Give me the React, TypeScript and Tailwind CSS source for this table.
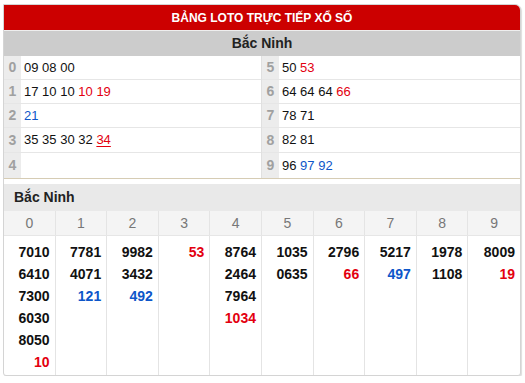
import React from "react";

type Part = { t: string; c?: "red" | "blue"; u?: boolean };

const left: Part[][] = [
  [{ t: "09" }, { t: "08" }, { t: "00" }],
  [{ t: "17" }, { t: "10" }, { t: "10" }, { t: "10", c: "red" }, { t: "19", c: "red" }],
  [{ t: "21", c: "blue" }],
  [{ t: "35" }, { t: "35" }, { t: "30" }, { t: "32" }, { t: "34", c: "red", u: true }],
  [],
];

const right: Part[][] = [
  [{ t: "50" }, { t: "53", c: "red" }],
  [{ t: "64" }, { t: "64" }, { t: "64" }, { t: "66", c: "red" }],
  [{ t: "78" }, { t: "71" }],
  [{ t: "82" }, { t: "81" }],
  [{ t: "96" }, { t: "97", c: "blue" }, { t: "92", c: "blue" }],
];

const cols: Part[][] = [
  [{ t: "7010" }, { t: "6410" }, { t: "7300" }, { t: "6030" }, { t: "8050" }, { t: "10", c: "red" }],
  [{ t: "7781" }, { t: "4071" }, { t: "121", c: "blue" }],
  [{ t: "9982" }, { t: "3432" }, { t: "492", c: "blue" }],
  [{ t: "53", c: "red" }],
  [{ t: "8764" }, { t: "2464" }, { t: "7964" }, { t: "1034", c: "red" }],
  [{ t: "1035" }, { t: "0635" }],
  [{ t: "2796" }, { t: "66", c: "red" }],
  [{ t: "5217" }, { t: "497", c: "blue" }],
  [{ t: "1978" }, { t: "1108" }],
  [{ t: "8009" }, { t: "19", c: "red" }],
];

// row heights of the top table, read off the reference
const rowH = ["h-[24px]", "h-[24px]", "h-[24px]", "h-[25px]", "h-[25px]"];

const color = (c?: string) =>
  c === "red" ? "text-[#e3000f]" : c === "blue" ? "text-[#0d56c9]" : "text-[#111]";

const Nums = ({ parts }: { parts: Part[] }) => (
  <span>
    {parts.map((p, i) => (
      <React.Fragment key={i}>
        {i > 0 && " "}
        <span className={`${color(p.c)} ${p.u ? "underline underline-offset-2" : ""}`}>{p.t}</span>
      </React.Fragment>
    ))}
  </span>
);

const Row = ({ d, parts, i }: { d: number; parts: Part[]; i: number }) => (
  <div className={`flex ${rowH[i]} ${i === 4 ? "" : "border-b border-[#e6e6e6]"}`}>
    <div className="w-[17px] bg-[#ececec] text-[#a0a0a0] font-bold text-[14px] flex items-center justify-center">
      {d}
    </div>
    <div className="flex-1 bg-white flex items-center pl-[3px] text-[13px]">
      <Nums parts={parts} />
    </div>
  </div>
);

export default function App() {
  return (
    <div
      className="pl-[3px] pt-[4px] bg-white"
      style={{ fontFamily: '"Liberation Sans", Arial, sans-serif' }}
    >
      <div className="w-[518px] border border-[#d4d4d4] rounded-tr-[6px] rounded-b-[3px] shadow-[1px_1px_1px_#ddd] overflow-hidden bg-white">
        <div className="h-[26px] bg-[#cc0000] text-white font-bold text-[12px] flex items-center justify-center border-b border-[#eee]">
          BẢNG LOTO TRỰC TIẾP XỔ SỐ
        </div>
        <div className="h-[25px] bg-[#cccccc] text-[#222] font-bold text-[14px] flex items-center justify-center">
          Bắc Ninh
        </div>
        <div className="grid grid-cols-2 border-b border-[#d6ccb4]">
          <div className="border-r border-[#e0e0e0]">
            {left.map((p, i) => (
              <Row key={i} d={i} parts={p} i={i} />
            ))}
          </div>
          <div>
            {right.map((p, i) => (
              <Row key={i} d={i + 5} parts={p} i={i} />
            ))}
          </div>
        </div>
        <div className="mt-[5px] h-[27px] bg-[#e9e9e9] flex items-center pl-[10px] font-bold text-[14px] text-[#222]">
          Bắc Ninh
        </div>
        <div className="grid grid-cols-10 h-[25px] bg-[#f4f4f4] border-b border-[#e6e6e6]">
          {cols.map((_, i) => (
            <div
              key={i}
              className={`flex items-center justify-center text-[14px] text-[#777] ${i < 9 ? "border-r border-[#e4e4e4]" : ""}`}
            >
              {i}
            </div>
          ))}
        </div>
        <div className="grid grid-cols-10 h-[139px]">
          {cols.map((c, i) => (
            <div
              key={i}
              className={`flex flex-col items-end pr-[5px] pt-[5px] ${i < 9 ? "border-r border-[#e4e4e4]" : ""}`}
            >
              {c.map((p, j) => (
                <div key={j} className={`h-[22px] leading-[22px] font-bold text-[14px] ${color(p.c)}`}>
                  {p.t}
                </div>
              ))}
            </div>
          ))}
        </div>
      </div>
    </div>
  );
}
